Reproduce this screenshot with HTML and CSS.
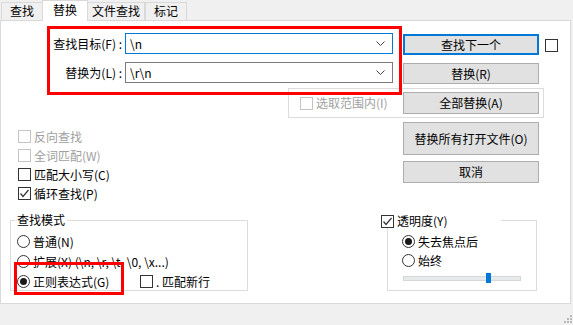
FILE: index.html
```html
<!DOCTYPE html>
<html lang="zh-CN">
<head>
    <meta charset="UTF-8">
    <title>替换</title>
    <link rel="stylesheet" href="styles.css">
</head>
<body>

<div class="tabs">
    <div class="tab first">查找</div>
    <div class="tab active">替换</div>
    <div class="tab wide">文件查找</div>
    <div class="tab">标记</div>
</div>

<div class="panel">
    <div class="find-row">
        <div class="fields">
            <div class="field">
                <label class="field-label">查找目标(F) :</label>
                <div class="combo focus">
                    <span class="combo-text">\n</span>
                    <svg class="chevron" width="9" height="5" viewBox="0 0 9 5"><polyline points="0.5,0.5 4.5,4.5 8.5,0.5" fill="none" stroke="#444" stroke-width="1"/></svg>
                </div>
            </div>
            <div class="field">
                <label class="field-label">替换为(L) :</label>
                <div class="combo">
                    <span class="combo-text">\r\n</span>
                    <svg class="chevron" width="9" height="5" viewBox="0 0 9 5"><polyline points="0.5,0.5 4.5,4.5 8.5,0.5" fill="none" stroke="#444" stroke-width="1"/></svg>
                </div>
            </div>
        </div>
        <div class="btn-col top">
            <button class="btn default">查找下一个</button>
            <button class="btn">替换(R)</button>
        </div>
        <span class="box side-box"></span>
    </div>

    <div class="scope-group">
        <div class="check disabled"><span class="box"></span><span class="check-text">选取范围内(I)</span></div>
        <button class="btn h22">全部替换(A)</button>
    </div>

    <div class="middle-row">
        <div class="checks">
            <div class="check disabled"><span class="box"></span><span class="check-text">反向查找</span></div>
            <div class="check disabled"><span class="box"></span><span class="check-text">全词匹配(W)</span></div>
            <div class="check"><span class="box"></span><span class="check-text">匹配大小写(C)</span></div>
            <div class="check">
                <span class="box"><svg width="11" height="11" viewBox="0 0 11 11"><polyline points="1.5,5.5 4,8.5 9.5,2" fill="none" stroke="#333" stroke-width="1.2"/></svg></span>
                <span class="check-text">循环查找(P)</span>
            </div>
        </div>
        <div class="btn-col">
            <button class="btn h33">替换所有打开文件(O)</button>
            <button class="btn h22">取消</button>
        </div>
    </div>

    <div class="bottom-row">
        <div class="group mode">
            <div class="group-title">查找模式</div>
            <div class="radios">
                <div class="radio"><span class="dot"></span><span class="check-text">普通(N)</span></div>
                <div class="radio"><span class="dot"></span><span class="check-text">扩展(X) (\n, \r, \t, \0, \x...)</span></div>
                <div class="radio-row">
                    <div class="radio regex"><span class="dot on"></span><span class="check-text">正则表达式(G)</span></div>
                    <div class="check"><span class="box"></span><span class="check-text">. 匹配新行</span></div>
                </div>
            </div>
        </div>

        <div class="group opacity">
            <div class="check opacity-title">
                <span class="box"><svg width="11" height="11" viewBox="0 0 11 11"><polyline points="1.5,5.5 4,8.5 9.5,2" fill="none" stroke="#333" stroke-width="1.2"/></svg></span>
                <span class="check-text">透明度(Y)</span>
            </div>
            <div class="radios tight">
                <div class="radio"><span class="dot on"></span><span class="check-text">失去焦点后</span></div>
                <div class="radio"><span class="dot"></span><span class="check-text">始终</span></div>
            </div>
            <div class="slider">
                <span class="thumb" style="left: 82px"></span>
            </div>
        </div>
    </div>
</div>

<div class="footer">
    <svg class="grip" width="9" height="9" viewBox="0 0 9 9" fill="#b9b9b9">
        <rect x="7" y="1" width="2" height="2"/>
        <rect x="4" y="4" width="2" height="2"/>
        <rect x="7" y="4" width="2" height="2"/>
        <rect x="1" y="7" width="2" height="2"/>
        <rect x="4" y="7" width="2" height="2"/>
        <rect x="7" y="7" width="2" height="2"/>
    </svg>
</div>

<div class="mark mark-fields"></div>
<div class="mark mark-regex"></div>

</body>
</html>
```

FILE: styles.css
```css
* {
    box-sizing: border-box;
}
body {
    margin: 0;
    width: 573px;
    height: 325px;
    overflow: hidden;
    position: relative;
    background: #f0f0f0;
    font-family: "Noto Sans CJK SC", "Noto Sans", sans-serif;
    font-size: 12px;
    line-height: 16px;
    color: #000;
}
.tabs {
    display: flex;
    align-items: flex-end;
    height: 20px;
    padding-left: 1px;
}
.tab {
    height: 18px;
    width: 42px;
    border: 1px solid #d9d9d9;
    border-bottom: none;
    background: #f0f0f0;
    text-align: center;
    line-height: 16px;
}
.tab.wide {
    width: 58px;
}
.tab.active {
    position: relative;
    z-index: 1;
    width: 46px;
    height: 21px;
    margin: 0 -1px -1px -1px;
    background: #fff;
    line-height: 18px;
}
.tab.first {
    width: 42px;
}
.panel {
    width: 571px;
    height: 284px;
    background: #fff;
    border: 1px solid #d9d9d9;
}
.find-row {
    display: flex;
    margin-top: 12px;
}
.fields {
    display: flex;
    flex-direction: column;
    gap: 8px;
    margin-left: 47px;
}
.field {
    display: flex;
    align-items: center;
    height: 21px;
}
.field-label {
    width: 74px;
    margin-right: 3px;
    text-align: right;
    white-space: nowrap;
}
.combo {
    display: flex;
    align-items: center;
    justify-content: space-between;
    width: 268px;
    height: 21px;
    padding: 0 7px 0 4px;
    border: 1px solid #7a7a7a;
    background: #fff;
}
.combo.focus {
    border-color: #0078d7;
}
.btn-col {
    display: flex;
    flex-direction: column;
    gap: 8px;
}
.btn-col.top {
    margin-left: 10px;
    margin-top: 1px;
}
.btn {
    width: 136px;
    height: 21px;
    padding: 0;
    border: 1px solid #adadad;
    background: #e1e1e1;
    font: inherit;
    color: #000;
}
.btn.default {
    border: 2px solid #0078d7;
}
.btn.h22 {
    height: 22px;
}
.btn.h33 {
    height: 33px;
}
.box {
    display: inline-flex;
    align-items: center;
    justify-content: center;
    flex: none;
    width: 13px;
    height: 13px;
    border: 1px solid #333;
    background: #fff;
}
.side-box {
    margin-left: 6px;
    margin-top: 6px;
}
.check, .radio {
    display: flex;
    align-items: center;
    height: 13px;
    white-space: nowrap;
}
.check-text {
    margin-left: 3px;
}
.check.disabled {
    color: #a0a0a0;
}
.check.disabled .box {
    border-color: #c4c4c4;
}
.scope-group {
    display: flex;
    align-items: center;
    width: 256px;
    height: 30px;
    margin: 4px 0 0 287px;
    padding: 0 4px 0 11px;
    border: 1px solid #dcdcdc;
}
.scope-group .btn {
    margin-left: auto;
}
.middle-row {
    display: flex;
    align-items: flex-start;
}
.checks {
    display: flex;
    flex-direction: column;
    gap: 6px;
    margin: 12px 0 0 17px;
}
.middle-row .btn-col {
    gap: 6px;
    margin: 4px 31px 0 auto;
}
.bottom-row {
    display: flex;
    margin-top: 20px;
}
.group {
    height: 71px;
    border: 1px solid #dcdcdc;
}
.group.mode {
    width: 238px;
    margin-left: 9px;
}
.group-title {
    width: max-content;
    height: 16px;
    margin: -9px 0 0 4px;
    padding: 0 2px;
    background: #fff;
}
.radios {
    display: flex;
    flex-direction: column;
    gap: 7px;
    margin-top: 7px;
    padding-left: 6px;
}
.radios.tight {
    gap: 6px;
    padding-left: 14px;
}
.dot {
    position: relative;
    flex: none;
    width: 13px;
    height: 13px;
    border: 1px solid #333;
    border-radius: 50%;
    background: #fff;
}
.dot.on::after {
    content: "";
    position: absolute;
    left: 2px;
    top: 2px;
    width: 7px;
    height: 7px;
    border-radius: 50%;
    background: #1a1a1a;
}
.radio-row {
    display: flex;
    align-items: center;
}
.radio.regex {
    width: 123px;
}
.group.opacity {
    width: 150px;
    margin-left: 139px;
}
.opacity-title {
    width: 120px;
    height: 14px;
    margin: -7px 0 0 -7px;
    background: #fff;
}
.slider {
    position: relative;
    width: 118px;
    height: 5px;
    margin: 9px 0 0 15px;
    border: 1px solid #d6d6d6;
    background: #e7eaea;
}
.thumb {
    position: absolute;
    top: -4px;
    width: 5px;
    height: 10px;
    background: #0078d7;
}
.footer {
    display: flex;
    justify-content: flex-end;
    align-items: flex-end;
    height: 21px;
    padding: 0 1px 2px 0;
}
.mark {
    position: absolute;
    border: 3px solid #f00;
}
.mark-fields {
    left: 47px;
    top: 26px;
    width: 355px;
    height: 69px;
}
.mark-regex {
    left: 14px;
    top: 262px;
    width: 110px;
    height: 33px;
}
```
